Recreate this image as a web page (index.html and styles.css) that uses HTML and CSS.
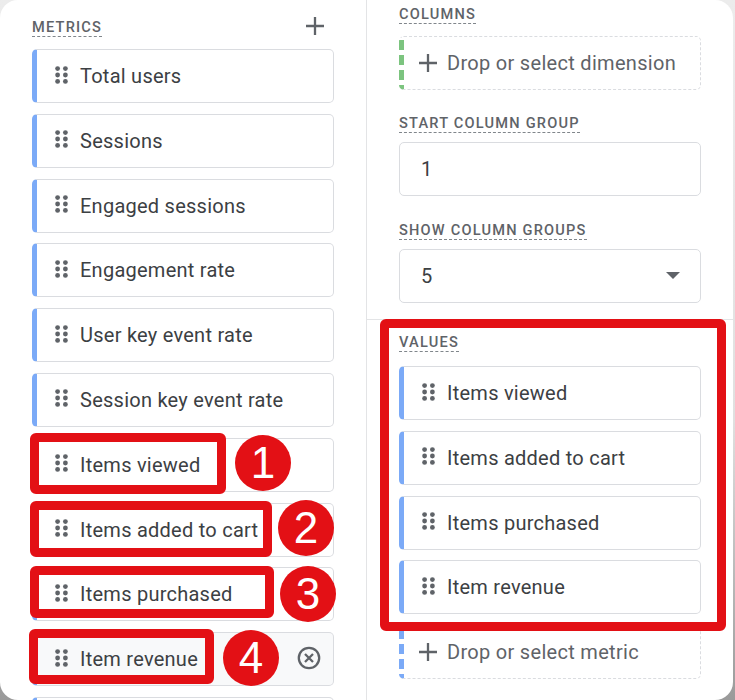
FILE: index.html
```html
<!DOCTYPE html>
<html lang="en">
<head>
    <meta charset="UTF-8">
    <title>Variables and settings</title>
    <link rel="stylesheet" href="styles.css">
</head>
<body>
    <svg width="0" height="0" class="defs">
        <symbol id="grip" viewBox="0 0 13 18">
            <circle cx="2.6" cy="2.6" r="2.4"/><circle cx="10.4" cy="2.6" r="2.4"/>
            <circle cx="2.6" cy="9" r="2.4"/><circle cx="10.4" cy="9" r="2.4"/>
            <circle cx="2.6" cy="15.4" r="2.4"/><circle cx="10.4" cy="15.4" r="2.4"/>
        </symbol>
        <symbol id="plus" viewBox="0 0 20 20">
            <path d="M10 1v18M1 10h18" fill="none" stroke="currentColor" stroke-width="2.3"/>
        </symbol>
    </svg>

    <div class="panel">
        <div class="col col-left">
            <div class="head-row">
                <span class="label">METRICS</span>
                <svg class="plus-head"><use href="#plus"/></svg>
            </div>
            <div class="chips">
                <div class="chip"><svg class="grip"><use href="#grip"/></svg>Total users</div>
                <div class="chip"><svg class="grip"><use href="#grip"/></svg>Sessions</div>
                <div class="chip"><svg class="grip"><use href="#grip"/></svg>Engaged sessions</div>
                <div class="chip"><svg class="grip"><use href="#grip"/></svg>Engagement rate</div>
                <div class="chip"><svg class="grip"><use href="#grip"/></svg>User key event rate</div>
                <div class="chip"><svg class="grip"><use href="#grip"/></svg>Session key event rate</div>
                <div class="chip"><svg class="grip"><use href="#grip"/></svg>Items viewed
                    <span class="mark mark-1"></span><span class="num num-1">1</span></div>
                <div class="chip"><svg class="grip"><use href="#grip"/></svg>Items added to cart
                    <span class="mark mark-2"></span><span class="num num-2">2</span></div>
                <div class="chip"><svg class="grip"><use href="#grip"/></svg>Items purchased
                    <span class="mark mark-3"></span><span class="num num-3">3</span></div>
                <div class="chip chip-hover"><svg class="grip"><use href="#grip"/></svg>Item revenue
                    <svg class="remove" viewBox="0 0 24 24"><circle cx="12" cy="12" r="10.2" fill="none" stroke="currentColor" stroke-width="2.3"/><path d="M8 8l8 8M16 8l-8 8" fill="none" stroke="currentColor" stroke-width="2.3"/></svg>
                    <span class="mark mark-4"></span><span class="num num-4">4</span></div>
                <div class="chip"></div>
            </div>
        </div>

        <div class="col col-right">
            <div class="settings">
                <span class="label">COLUMNS</span>
                <div class="drop drop-green"><svg class="plus"><use href="#plus"/></svg>Drop or select dimension</div>
                <span class="label label-gap">START COLUMN GROUP</span>
                <div class="field">1</div>
                <span class="label label-gap">SHOW COLUMN GROUPS</span>
                <div class="field field-select">5<span class="arrow"></span></div>
            </div>
            <div class="values">
                <span class="mark mark-values"></span>
                <span class="label">VALUES</span>
                <div class="chips chips-values">
                    <div class="chip"><svg class="grip"><use href="#grip"/></svg>Items viewed</div>
                    <div class="chip"><svg class="grip"><use href="#grip"/></svg>Items added to cart</div>
                    <div class="chip"><svg class="grip"><use href="#grip"/></svg>Items purchased</div>
                    <div class="chip"><svg class="grip"><use href="#grip"/></svg>Item revenue</div>
                </div>
                <div class="drop drop-blue"><svg class="plus"><use href="#plus"/></svg>Drop or select metric</div>
            </div>
        </div>
    </div>
</body>
</html>
```

FILE: styles.css
```css
html, body {
    margin: 0;
    height: 700px;
    overflow: hidden;
    background: linear-gradient(#ececec, #e0e0e0 60%, #9a9a9a);
}

.defs {
    position: absolute;
}

.panel {
    display: flex;
    width: 733px;
    height: 700px;
    background: #fff;
    border-radius: 18px;
    overflow: hidden;
    font-family: 'Roboto', sans-serif;
    color: #3c4043;
}

.col-left {
    width: 367px;
    flex: none;
    box-sizing: border-box;
    padding: 18px 32px 0;
    border-right: 1px solid #e3e4e6;
}

.col-right {
    flex: 1;
}

.head-row {
    display: flex;
    justify-content: space-between;
    align-items: flex-start;
    height: 20px;
    margin-bottom: 11px;
}

.label {
    display: block;
    width: fit-content;
    font-size: 14.6px;
    line-height: 18px;
    font-weight: 500;
    letter-spacing: 1.2px;
    color: #5f6368;
    border-bottom: 1px dashed #80868b;
}

.plus-head {
    width: 20px;
    height: 20px;
    margin: -2px 9px 0 0;
    color: #5f6368;
}

.chips {
    display: flex;
    flex-direction: column;
    gap: 10.8px;
}

.chip {
    position: relative;
    display: flex;
    align-items: center;
    flex: none;
    width: 302px;
    height: 54px;
    box-sizing: border-box;
    border: 1px solid #dadce0;
    border-left: 5px solid #7baaf7;
    border-radius: 5px;
    font-size: 20px;
    letter-spacing: 0.25px;
    background: #fff;
}

.chip-hover {
    background: #f8f9fa;
}

.grip {
    width: 13px;
    height: 18px;
    margin: -3px 12px 0 18px;
    fill: #5f6368;
    flex: none;
}

.remove {
    position: absolute;
    right: 12px;
    top: 13px;
    width: 24px;
    height: 24px;
    color: #5f6368;
}

.col-right .label,
.drop,
.field {
    margin-left: 32px;
}

.settings {
    height: 320px;
    box-sizing: border-box;
    padding-top: 5px;
    border-bottom: 1px solid #e3e4e6;
}

.col-right .label-gap {
    margin-top: 24.4px;
}

.drop {
    display: flex;
    align-items: center;
    width: 302px;
    height: 54px;
    box-sizing: border-box;
    margin-top: 12px;
    padding-left: 18px;
    border: 1px dashed #dadce0;
    border-left-color: transparent;
    border-radius: 5px;
    font-size: 20px;
    letter-spacing: 0.3px;
    color: #5f6368;
    background-repeat: no-repeat;
    background-position: -1px -1px;
    background-size: 5px 54px;
}

.drop-green {
    background-image: repeating-linear-gradient(#fff 0 4px, #7cc47f 4px 14px, #fff 14px 15px);
}

.drop-blue {
    margin-top: 10.8px;
    background-image: repeating-linear-gradient(#fff 0 4px, #7baaf7 4px 14px, #fff 14px 15px);
}

.plus {
    width: 20px;
    height: 20px;
    margin-right: 9px;
}

.field {
    display: flex;
    align-items: center;
    justify-content: space-between;
    width: 302px;
    height: 54px;
    box-sizing: border-box;
    margin-top: 9px;
    padding: 0 20px 0 21px;
    border: 1px solid #dadce0;
    border-radius: 5px;
    font-size: 20px;
}

.arrow {
    width: 0;
    height: 0;
    border-left: 7px solid transparent;
    border-right: 7px solid transparent;
    border-top: 7px solid #5f6368;
}

.values {
    position: relative;
    padding-top: 13px;
}

.chips-values {
    margin: 14px 0 0 32px;
}

/* red annotations on top of the screenshot */
.mark {
    position: absolute;
    box-sizing: border-box;
    border: 9px solid #e31015;
    border-radius: 6px;
    pointer-events: none;
}

.mark-1 { left: -7px; top: -6px; width: 196px; height: 61px; }
.mark-2 { left: -7px; top: -3px; width: 242px; height: 56px; }
.mark-3 { left: -7px; top: -2px; width: 244px; height: 52px; }
.mark-4 { left: -8px; top: -4px; width: 185px; height: 55px; }

.mark-values {
    left: 12.5px;
    top: -1px;
    width: 346.5px;
    height: 312px;
}

.num {
    position: absolute;
    width: 56px;
    height: 56px;
    border-radius: 50%;
    background: #e31015;
    color: #fff;
    font-family: 'Liberation Sans', sans-serif;
    font-size: 44px;
    line-height: 56px;
    letter-spacing: 0;
    text-align: center;
}

.num-1 { left: 198px; top: -4px; }
.num-2 { left: 241px; top: -4px; }
.num-3 { left: 243px; top: -2px; }
.num-4 { left: 186px; top: -3px; }
```
